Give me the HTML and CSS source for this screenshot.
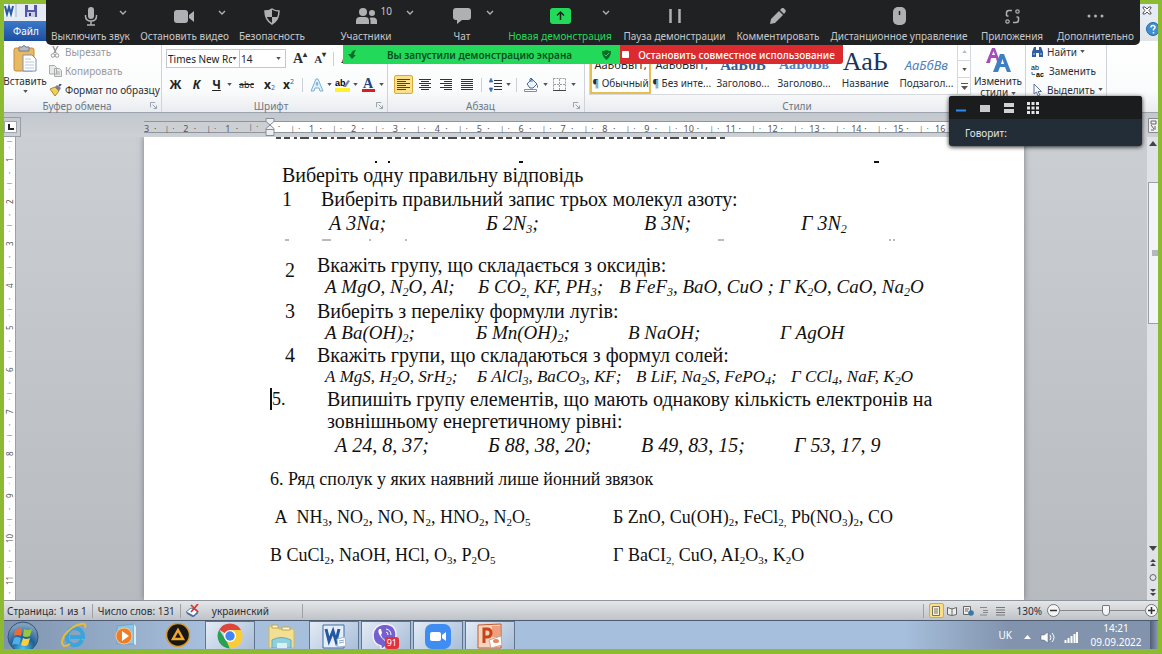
FILE: index.html
```html
<!DOCTYPE html>
<html lang="ru">
<head>
<meta charset="utf-8">
<meta name="viewport" content="width=device-width, initial-scale=1">
<title>Microsoft Word</title>
<link rel="stylesheet" href="styles.css">
</head>
<body>
<svg class="defs" aria-hidden="true">
  <symbol id="caret" viewBox="0 0 6 4"><path d="M0 0h6L3 4z" fill="currentColor"/></symbol>
  <symbol id="chev" viewBox="0 0 8 5"><path d="M1 1l3 3 3-3" fill="none" stroke="currentColor" stroke-width="1.4"/></symbol>
  <symbol id="launch" viewBox="0 0 8 8"><path d="M.5 6V.5H6M3 3l4 4M7.500 4v3.500H4" fill="none" stroke="#8b929b"/></symbol>
</svg>
<div class="screen">
  <div class="word">
    <header class="titlebar">
      <svg width="13" height="13" viewBox="0 0 13 13"><path d="M0 0h10v13H0z" fill="#eef3fa"/><path d="M1 2l2 8 2-7 2 7 2-8" fill="none" stroke="#2a5ba4" stroke-width="2"/><path d="M12 0v13" stroke="#9db4cf"/></svg>
      <svg width="12" height="12" viewBox="0 0 12 12"><path d="M0 0h12v12H0z" fill="#5557a8"/><path d="M3 0h6v5H3z" fill="#e6e9f6"/><path d="M2 7h8v5H2z" fill="#c9cde8"/><path d="M4 8h2v3H4z" fill="#3b3d80"/></svg>
      <span class="spacer"></span>
      <button class="plain" aria-label="Закрыть"><svg width="10" height="9" viewBox="0 0 10 9"><path d="M1 1h2l2 2 2-2h2v1L7 4.500l2 2.500v1H7L5 6 3 8H1V7l2-2.500L1 2z" fill="#fff" stroke="#555"/></svg></button>
    </header>
    <nav class="tabs">
      <button class="file-tab">Файл</button>
      <span class="spacer"></span>
      <button class="plain" aria-label="Справка"><svg width="12" height="14" viewBox="0 0 12 14"><circle cx="7" cy="7" r="6.500" fill="#3f8fd0" stroke="#2368a4"/><path d="M5 5.500Q5 3.500 7 3.500T9 5.500Q9 6.500 7.500 7.300V8.500M7.500 10v1.500" fill="none" stroke="#fff" stroke-width="1.500"/></svg></button>
    </nav>

    <section class="ribbon">
      <div class="group clipboard">
        <div class="tools">
          <button class="big">
            <svg width="26" height="28" viewBox="0 0 26 28"><rect x="2" y="3" width="20" height="23" rx="2" fill="#e9b862" stroke="#c48c39"/><path d="M7 2h3q2-3 4 0h3v4H7z" fill="#b9bdc4" stroke="#777b82"/><path d="M11 10h9l4 4v12H11z" fill="#fff" stroke="#7d93b5"/><path d="M13 14h6M13 17h9M13 20h9M13 23h9" stroke="#b8c7df"/></svg>
            <span>Вставить</span>
            <svg class="caret"><use href="#caret"/></svg>
          </button>
          <div class="stack">
            <button disabled><svg width="13" height="12" viewBox="0 0 13 12"><path d="M4 0l3 7M9 0L5 7" stroke="#999" stroke-width="1.500"/><circle cx="4" cy="9.500" r="1.800" fill="none" stroke="#999"/><circle cx="8" cy="9.500" r="1.800" fill="none" stroke="#999"/></svg>Вырезать</button>
            <button disabled><svg width="13" height="12" viewBox="0 0 13 12"><path d="M.5.5h5l2 2V9h-7zM5.500 3.500h5l2 2v6h-7z" fill="#e8e8e8" stroke="#aaa"/><path d="M7 7h4M7 9h4" stroke="#aaa"/></svg>Копировать</button>
            <button><svg width="13" height="12" viewBox="0 0 13 12"><path d="M1 5l5-2 4 4-4 5z" fill="#f2cf55" stroke="#ae842c"/><path d="M6 3l2-2 4 3-2 3z" fill="#777da0"/><path d="M10 2l2-2" stroke="#555" stroke-width="2"/></svg>Формат по образцу</button>
          </div>
        </div>
        <footer><span>Буфер обмена</span><svg class="launch"><use href="#launch"/></svg></footer>
      </div>

      <div class="group font">
        <div class="tools rows">
          <div class="row">
            <label class="combo name"><select aria-label="Шрифт"><option>Times New Rc</option></select><svg class="caret"><use href="#caret"/></svg></label>
            <label class="combo size"><select aria-label="Размер"><option>14</option></select><svg class="caret"><use href="#caret"/></svg></label>
            <button class="serif grow">A<sup>▴</sup></button>
            <button class="serif shrink">A<sup>▾</sup></button>
            <i class="sep"></i>
            <button class="serif">A</button>
          </div>
          <div class="row marks">
            <button><b>Ж</b></button>
            <button><b><em>К</em></b></button>
            <button class="narrow"><b><u>Ч</u></b></button><svg class="caret"><use href="#caret"/></svg>
            <button class="strike"><s>abc</s></button>
            <button class="narrow"><b>x</b><sub>2</sub></button>
            <button class="narrow"><b>x</b><sup>2</sup></button>
            <i class="sep"></i>
            <button class="narrow"><svg width="14" height="14" viewBox="0 0 14 14"><path d="M1 13L6 1h2l5 12h-3L9 10H5l-1 3zM6 7h2L7 4z" fill="#e2f0fb" stroke="#79afd9"/></svg></button><svg class="caret"><use href="#caret"/></svg>
            <button class="narrow"><svg width="15" height="15" viewBox="0 0 15 15"><path d="M0 11h15v4H0z" fill="#fff12b"/><text x="0" y="9" font-size="9" font-weight="700" font-family="Liberation Sans, sans-serif">ab</text><path d="M8 10l5-7 2 1-4 6z" fill="#7784a5"/></svg></button><svg class="caret"><use href="#caret"/></svg>
            <button class="narrow"><svg width="15" height="15" viewBox="0 0 15 15"><path d="M1 12h13v3H1z" fill="#d61f1f"/><text x="2" y="11" font-size="14" font-weight="700" fill="#24427c" font-family="Liberation Serif, serif">A</text></svg></button><svg class="caret"><use href="#caret"/></svg>
          </div>
        </div>
        <footer><span>Шрифт</span><svg class="launch"><use href="#launch"/></svg></footer>
      </div>

      <div class="group para">
        <div class="tools rows">
          <div class="row"></div>
          <div class="row marks">
            <button class="on" aria-label="По левому краю"><svg width="13" height="12" viewBox="0 0 13 12"><path d="M0 .5h13M0 2.500h9M0 4.500h13M0 6.500h9M0 8.500h13M0 10.500h9" stroke="#4a4330"/></svg></button>
            <button aria-label="По центру"><svg width="12" height="12" viewBox="0 0 12 12"><path d="M0 .5h12M2 2.500h8M0 4.500h12M2 6.500h8M0 8.500h12M2 10.500h8" stroke="#333"/></svg></button>
            <button aria-label="По правому краю"><svg width="12" height="12" viewBox="0 0 12 12"><path d="M0 .5h12M4 2.500h8M0 4.500h12M4 6.500h8M0 8.500h12M4 10.500h8" stroke="#333"/></svg></button>
            <button aria-label="По ширине"><svg width="12" height="12" viewBox="0 0 12 12"><path d="M0 .5h12M0 2.500h12M0 4.500h12M0 6.500h12M0 8.500h12M0 10.500h12" stroke="#333"/></svg></button>
            <i class="sep"></i>
            <button class="narrow" aria-label="Интервал"><svg width="13" height="14" viewBox="0 0 13 14"><path d="M5 2.500h8M5 5.500h8M5 8.500h8M5 11.500h8" stroke="#333"/><path d="M2 0l2 4H0zM2 14l2-4H0zM2 3v2M2 9v2" fill="#3b6fb6" stroke="#3b6fb6" stroke-width=".5"/></svg></button><svg class="caret"><use href="#caret"/></svg>
            <i class="sep"></i>
            <button aria-label="Заливка"><svg width="15" height="15" viewBox="0 0 15 15"><path d="M3 7l5-5 5 5-4 4H6z" fill="#eef4fb" stroke="#47679a"/><path d="M6 5V2q1-2 2 0v3" fill="none" stroke="#47679a"/><path d="M13 7q2 3 0 4z" fill="#2c76c7"/><path d="M.5 12.500h12v2H.5z" fill="#fff" stroke="#88a"/></svg></button><svg class="caret"><use href="#caret"/></svg>
            <button aria-label="Границы"><svg width="13" height="13" viewBox="0 0 13 13"><path d="M.5.5h12v12M.5.5v12M6.500 1v11M1 6.500h11" fill="none" stroke="#999" stroke-dasharray="2 1"/><path d="M0 12.500h13" stroke="#444"/></svg></button><svg class="caret"><use href="#caret"/></svg>
          </div>
        </div>
        <footer><span>Абзац</span><svg class="launch"><use href="#launch"/></svg></footer>
      </div>

      <div class="group styles">
        <div class="tools">
          <div class="gallery">
            <button class="chosen"><span class="sample">АаБбВвГг,</span><span>¶ Обычный</span></button>
            <button><span class="sample">АаБбВвГг,</span><span>¶ Без инте...</span></button>
            <button><span class="sample h1">АаБбВ</span><span>Заголово...</span></button>
            <button><span class="sample h2">АаБбВв</span><span>Заголово...</span></button>
            <button><span class="sample title">АаЬ</span><span>Название</span></button>
            <button><span class="sample sub">АаБбВв</span><span>Подзагол...</span></button>
            <div class="gallery-scroll">
              <button aria-label="Вверх" disabled><svg width="5" height="3" viewBox="0 0 6 4"><path d="M0 4h6L3 0z" fill="#bbb"/></svg></button>
              <button aria-label="Вниз"><svg class="caret"><use href="#caret"/></svg></button>
              <button aria-label="Все стили"><svg width="7" height="7" viewBox="0 0 7 7"><path d="M0 .5h7" stroke="#555"/><path d="M0 3h7L3.500 7z" fill="#555"/></svg></button>
            </div>
          </div>
          <button class="big change">
            <svg width="26" height="26" viewBox="0 0 26 26"><path d="M1 16L7 1h3l5 14h-3l-1-4H6l-1 5zM7 8h3L8.500 4z" fill="#a44fb8"/><path d="M8 25l7-18h4l7 18h-4l-2-5h-5l-2 5zM16 17h3l-1.500-5z" fill="#3f7fc4"/></svg>
            <span>Изменить<br>стили <svg class="caret"><use href="#caret"/></svg></span>
          </button>
        </div>
        <footer><span>Стили</span></footer>
      </div>

      <div class="group edit">
        <div class="tools">
          <div class="stack">
            <button><svg width="13" height="12" viewBox="0 0 13 12"><path d="M1 11V6l2-5h2v3h3V1h2l2 5v5H8V7H5v4z" fill="#2f5ea3"/><path d="M2 8h2M9 8h2" stroke="#b9d0ee"/></svg>Найти <svg class="caret"><use href="#caret"/></svg></button>
            <button><svg width="15" height="14" viewBox="0 0 15 14"><text x="0" y="6" font-size="7" font-family="Liberation Sans, sans-serif">ab</text><text x="5" y="13" font-size="7" font-family="Liberation Sans, sans-serif" font-weight="700">ac</text><path d="M1 8v2.500h3" fill="none" stroke="#3c68a8"/></svg>Заменить</button>
            <button><svg width="13" height="12" viewBox="0 0 13 12"><path d="M3 0v10l2.500-2L7 12l2-1-2-3.500h3.500z" fill="#fff" stroke="#5774a8"/></svg>Выделить <svg class="caret"><use href="#caret"/></svg></button>
          </div>
        </div>
        <footer></footer>
      </div>
    </section>

    <div class="sheet ruler-row">
      <div class="corner"><span><svg width="6" height="6" viewBox="0 0 6 6"><path d="M1 0v5h5" fill="none" stroke="#222" stroke-width="2"/></svg></span></div>
      <div class="ruler">
        <span>3</span><span>2</span><span>1</span><span class="zero"><svg width="10" height="18" viewBox="0 0 10 18"><path d="M1 .5h8v3L5 7 1 3.500zM5 7l4 3.500V17.500H1v-7zM1 11.500h8" fill="#eceef1" stroke="#888d94"/></svg></span><span>1</span><span>2</span><span>3</span><span>4</span><span>5</span><span>6</span><span>7</span><span>8</span><span>9</span><span>10</span><span>11</span><span>12</span><span>13</span><span>14</span><span>15</span><span>16</span><span class="tail"></span><span class="tail"></span>
      </div>
      <button class="plain toggle" aria-label="Линейка"><svg width="10" height="15" viewBox="0 0 10 15"><path d="M.5.5h12v14H.5z" fill="#eef0f3" stroke="#888"/><path d="M3 3h5v3H3zM7 8v4M3 12h3M3 7l3 4" fill="none" stroke="#666"/></svg></button>
    </div>

    <main class="sheet canvas">
      <div class="vruler"><span>1</span><span>2</span><span>3</span><span>4</span><span>5</span><span>6</span><span>7</span><span>8</span><span>9</span><span>10</span><span>11</span></div>
      <article class="page">
        <svg class="scrap head" height="26" viewBox="0 0 740 26"><path d="M6 1h452" stroke="#111" stroke-width="1.500" stroke-dasharray="5 3 6 4 3 3 9 4"/><path d="M105 25h2M118 25h2M249 25h4M604 25h5" stroke="#111" stroke-width="2"/></svg>
        <p class="lead">Виберіть одну правильну відповідь</p>
        <section class="q first">
          <span class="num">1</span>
          <div><p>Виберіть правильний запис трьох молекул азоту:</p>
          <p class="opts o1"><span>А 3Na;</span><span>Б 2N<sub>3</sub>;</span><span>В 3N;</span><span>Г 3N<sub>2</sub></span></p></div>
        </section>
        <svg class="scrap" height="19" viewBox="0 0 740 19"><path d="M15 5h4M52 5h9M99 5h2M135 5h2M448 5h6M619 5h2M623 5h2" stroke="#777"/></svg>
        <section class="q">
          <span class="num low">2</span>
          <div><p>Вкажіть групу, що складається з оксидів:</p>
          <p class="opts o2"><span>А MgO, N<sub>2</sub>O, Al;</span><span>Б CO<sub>2,</sub> KF, PH<sub>3</sub>;</span><span>В FeF<sub>3</sub>, BaO, CuO ;</span><span>Г K<sub>2</sub>O, CaO, Na<sub>2</sub>O</span></p></div>
        </section>
        <section class="q gap">
          <span class="num">3</span>
          <div><p>Виберіть з переліку формули лугів:</p>
          <p class="opts o3"><span>А Ba(OH)<sub>2</sub>;</span><span>Б Mn(OH)<sub>2</sub>;</span><span>В NaOH;</span><span>Г AgOH</span></p></div>
        </section>
        <section class="q">
          <span class="num">4</span>
          <div><p>Вкажіть групи, що складаються з формул солей:</p>
          <p class="opts o4"><span>А MgS, H<sub>2</sub>O, SrH<sub>2</sub>;</span><span>Б AlCl<sub>3</sub>, BaCO<sub>3</sub>, KF;</span><span>В LiF, Na<sub>2</sub>S, FePO<sub>4</sub>;</span><span>Г CCl<sub>4</sub>, NaF, К<sub>2</sub>О</span></p></div>
        </section>
        <section class="q fifth">
          <span class="num typed">5.</span>
          <div><p>Випишіть групу елементів, що мають однакову кількість електронів на<br>зовнішньому енергетичному рівні:</p>
          <p class="opts o5"><span>А 24, 8, 37;</span><span>Б 88, 38, 20;</span><span>В 49, 83, 15;</span><span>Г 53, 17, 9</span></p></div>
        </section>
        <section class="six">
          <p>6. Ряд сполук у яких наявний лише йонний звязок</p>
          <p class="pair"><span>&nbsp;А&nbsp; NH<sub>3</sub>, NO<sub>2</sub>, NO, N<sub>2</sub>, HNO<sub>2</sub>, N<sub>2</sub>O<sub>5</sub></span><span>Б ZnO, Cu(OH)<sub>2</sub>, FeCl<sub>2,</sub> Pb(NO<sub>3</sub>)<sub>2</sub>, CO</span></p>
          <p class="pair"><span>В CuCl<sub>2</sub>, NaOH, HCl, O<sub>3</sub>, P<sub>2</sub>O<sub>5</sub></span><span>Г BaCI<sub>2,</sub> CuO, AI<sub>2</sub>O<sub>3</sub>, K<sub>2</sub>O</span></p>
        </section>
      </article>
      <div class="scroll">
        <svg width="8" height="5" viewBox="0 0 8 5"><path d="M0 5h8L4 0z" fill="#444"/></svg>
        <div class="thumb"><i></i></div>
        <span class="spacer"></span>
        <svg width="8" height="5" viewBox="0 0 8 5"><path d="M0 0h8L4 5z" fill="#444"/></svg>
        <svg width="8" height="7" viewBox="0 0 8 7"><path d="M1 3h6L4 0zM1 7h6L4 4z" fill="#444"/></svg>
        <svg width="8" height="7" viewBox="0 0 8 7"><circle cx="4" cy="3.500" r="3" fill="none" stroke="#666"/></svg>
        <svg width="8" height="7" viewBox="0 0 8 7"><path d="M1 0h6L4 3zM1 4h6L4 7z" fill="#444"/></svg>
      </div>
    </main>

    <footer class="status">
      <span>Страница: 1 из 1</span><i></i>
      <span>Число слов: 131</span><i></i>
      <svg width="14" height="13" viewBox="0 0 14 13"><path d="M0 8l5-4 7 3-4 5z" fill="#fff" stroke="#5b7bb0"/><path d="M1 9l6 3.500 5-4" fill="none" stroke="#4b6ca8" stroke-width="1.500"/><path d="M5 1l7 7M12 0L5 8" stroke="#d8352c" stroke-width="1.700"/></svg>
      <span class="lang">украинский</span><i></i>
      <span class="spacer"></span><i></i>
      <div class="views">
        <button class="on" aria-label="Разметка страницы"><svg width="10" height="10" viewBox="0 0 10 10"><path d="M1.500.5h7v9h-7zM3 3h4M3 5h4M3 7h4" fill="#f7f2df" stroke="#77705a"/></svg></button>
        <button aria-label="Чтение"><svg width="10" height="10" viewBox="0 0 10 10"><path d="M.5 1.500L5 3l4.500-1.500v7L5 9.500.5 8.500zM5 3v6" fill="#eee" stroke="#666"/></svg></button>
        <button aria-label="Веб-документ"><svg width="11" height="10" viewBox="0 0 11 10"><path d="M.5.5h7v8h-7zM2 3h4M2 5h3" fill="#eee" stroke="#666"/><circle cx="8" cy="7" r="2.800" fill="#3779a4"/></svg></button>
        <button aria-label="Структура"><svg width="9" height="10" viewBox="0 0 9 10"><path d="M0 1.500h7M3 4.500h5M3 6.500h5M0 9h7" stroke="#888"/></svg></button>
        <button aria-label="Черновик"><svg width="9" height="10" viewBox="0 0 9 10"><path d="M0 1.500h9M0 4h9M0 6.500h9M0 9h9" stroke="#777"/></svg></button>
      </div>
      <span class="pct">130%</span>
      <div class="zoomer">
        <button aria-label="Уменьшить"><svg width="13" height="13" viewBox="0 0 13 13"><circle cx="6.500" cy="6.500" r="6" fill="#f4f5f6" stroke="#777"/><path d="M3 6.500h7" stroke="#333" stroke-width="1.500"/></svg></button>
        <input type="range" min="0" max="100" value="54" aria-label="Масштаб">
        <button aria-label="Увеличить"><svg width="13" height="13" viewBox="0 0 13 13"><circle cx="6.500" cy="6.500" r="6" fill="#f4f5f6" stroke="#777"/><path d="M3 6.500h7M6.500 3v7" stroke="#333" stroke-width="1.500"/></svg></button>
      </div>
    </footer>
  </div>

  <nav class="taskbar">
    <button class="start" aria-label="Пуск"><svg width="32" height="28" viewBox="0 0 32 28"><defs><radialGradient id="orb" cx=".5" cy=".9" r=".8"><stop offset="0" stop-color="#4fc3ee"/><stop offset=".5" stop-color="#1f5f96"/><stop offset="1" stop-color="#7f9fbc"/></radialGradient></defs><circle cx="16" cy="16" r="15" fill="url(#orb)" stroke="#31567a"/><path d="M8 9q4-3 7-1l-1 7q-4-2-7 0z" fill="#ee6a35"/><path d="M17 8q4 2 8 0l-2 7q-4 2-7 0z" fill="#93c842"/><path d="M7 17q3-2 7 0l-2 7q-3-2-7 0z" fill="#4db0e9"/><path d="M16 17q3 2 7 0l-2 7q-4 2-7 0z" fill="#fbcf3c"/></svg></button>
    <button aria-label="Internet Explorer"><svg width="28" height="26" viewBox="0 0 28 26"><path d="M22 18q-3 6-9 5-7-2-6-10 2-7 8-7 8 1 8 9H10" fill="none" stroke="#39a5dd" stroke-width="4"/><path d="M25 6q2-5-4-4Q11 4 4 14q-4 8 0 10 3 0 6-2" fill="none" stroke="#e9bd35" stroke-width="2"/></svg></button>
    <button aria-label="Проигрыватель"><svg width="24" height="24" viewBox="0 0 24 24"><path d="M3 3l17-2v20H3z" fill="#8fc5e5" stroke="#6ea5c8"/><path d="M20 1l2 3v18l-2-1z" fill="#d5ebf8"/><circle cx="10" cy="13" r="8" fill="#f07d26" stroke="#f8c693"/><path d="M8 8l7 5-7 5z" fill="#fff"/></svg></button>
    <button aria-label="AIMP"><svg width="26" height="26" viewBox="0 0 26 26"><circle cx="13" cy="13" r="11.500" fill="#171717" stroke="#d79a2b" stroke-width="1.500"/><path d="M13 8l5 9H8z" fill="none" stroke="#f3a72a" stroke-width="2.500"/></svg></button>
    <button class="open" aria-label="Chrome"><svg width="26" height="26" viewBox="0 0 26 26"><path d="M13 13L2.200 6.800A12.500 12.500 0 0 1 24 7H13z" fill="#df4538"/><path d="M13 13V7h11A12.500 12.500 0 0 1 13 25.500z" fill="#fbcd35"/><path d="M2.200 6.800L10 19l3 6.500A12.500 12.500 0 0 1 2.200 6.800z" fill="#2aa052"/><path d="M18 16l-5 9.500L10 18z" fill="#fbcd35"/><circle cx="13" cy="13" r="6" fill="#fff"/><circle cx="13" cy="13" r="4.700" fill="#4285f4"/></svg></button>
    <button aria-label="Проводник"><svg width="28" height="26" viewBox="0 0 28 26"><path d="M1 4h8l2 3h15v19H1z" fill="#f1df93" stroke="#d2b95a"/><path d="M4 3h6v3H4zM14 5h8v3h-8z" fill="#fff5c9" stroke="#bfa550"/><path d="M4 18q9-5 19 0v8H4z" fill="#8fd0df" stroke="#64a9be"/><path d="M9 21h10v5H9z" fill="#d8f1f2"/></svg></button>
    <button class="open" aria-label="Word"><svg width="25" height="26" viewBox="0 0 25 26"><path d="M1 2h21v23H1z" fill="#e5eef9" stroke="#3d6ba9"/><path d="M4 6l3 12 4-10 3 10 3-12" fill="none" stroke="#2458a3" stroke-width="3"/><path d="M15 16l8-2 1 9-8 1z" fill="#fff" stroke="#9bb3d2"/><path d="M17 18l5-1M17 20l5-1" stroke="#8aa6ce"/></svg></button>
    <button class="open" aria-label="Viber"><svg width="28" height="26" viewBox="0 0 28 26"><path d="M12 1q12 0 12 11t-11 12l-4 3v-4Q1 21 1 12T12 1z" fill="#7460cf" stroke="#f3f0fc" stroke-width="1.500"/><path d="M7 6q-2 3 2 8t8 6q2-1 1-3l-3-1-2 1q-3-2-4-5l1-2-1-4z" fill="#fff"/><path d="M14 6q5 1 5 6M14 9q2 0 2 3" fill="none" stroke="#fff"/></svg><span class="badge">91</span></button>
    <button class="open" aria-label="Zoom"><svg width="26" height="26" viewBox="0 0 26 26"><rect y="1" width="26" height="25" rx="7" fill="#3f8cf3"/><rect x="5" y="9" width="11" height="9" rx="2" fill="#fff"/><path d="M17 12l4-3v9l-4-3z" fill="#fff"/></svg></button>
    <button class="open" aria-label="PowerPoint"><svg width="26" height="26" viewBox="0 0 26 26"><path d="M1 2l23-1v24H1z" fill="#f5d4bd" stroke="#c75a2a"/><path d="M15 3h8v11h-8z" fill="#ef9f7e"/><path d="M7 20V6h3q4 0 4 4t-4 4H7" fill="none" stroke="#c8441b" stroke-width="3"/><path d="M12 17l12-4 1 9-11 3z" fill="#fff" stroke="#d8a38b"/><ellipse cx="19" cy="18" rx="3" ry="2" fill="#e58860"/></svg></button>
    <span class="spacer"></span>
    <span class="kb">UK</span>
    <div class="tray">
      <svg width="7" height="4" viewBox="0 0 7 4"><path d="M0 4h7L3.500 0z" fill="#fff"/></svg>
      <svg width="15" height="13" viewBox="0 0 15 13"><path d="M1 4h3l4-3v11L4 9H1z" fill="#fff" stroke="#506078" stroke-width=".5"/><path d="M10 4q2 2.500 0 5M12 2q4 4.500 0 9" fill="none" stroke="#fff"/></svg>
      <svg width="14" height="12" viewBox="0 0 14 12"><path d="M1.500 12V9M4.500 12V7M7.500 12V5M10.500 12V3M13 12V1" stroke="#fff" stroke-width="2"/></svg>
    </div>
    <time class="clock"><span>14:21</span><span>09.09.2022</span></time>
    <button class="peek" aria-label="Свернуть все окна"></button>
  </nav>

  <div class="meeting">
    <div class="controls">
      <button><span class="ic"><svg width="14" height="19" viewBox="0 0 14 19"><rect x="4" y="0" width="6" height="12" rx="3" fill="#aeb0b3"/><path d="M1.500 8v1q0 5 5.500 5t5.500-5V8M7 14v4M3 18h8" fill="none" stroke="#aeb0b3" stroke-width="1.500"/></svg></span><span class="side"><svg class="chev"><use href="#chev"/></svg></span><span class="cap">Выключить звук</span></button>
      <button><span class="ic"><svg width="21" height="13" viewBox="0 0 21 13"><rect width="14" height="13" rx="3" fill="#aeb0b3"/><path d="M15 5l5-4v11l-5-4z" fill="#aeb0b3"/></svg></span><span class="side"><svg class="chev"><use href="#chev"/></svg></span><span class="cap">Остановить видео</span></button>
      <button><span class="ic"><svg width="16" height="17" viewBox="0 0 16 17"><path d="M8 1q3 2 7 2 0 9-7 13Q1 12 1 3q4 0 7-2z" fill="none" stroke="#aeb0b3" stroke-width="1.500"/><path d="M8 1v8H1.500Q1 6 1 3q4 0 7-2zM8 9h6.500Q13 13 8 16z" fill="#aeb0b3"/></svg></span><span class="cap">Безопасность</span></button>
      <button><span class="ic"><svg width="21" height="16" viewBox="0 0 21 16"><circle cx="7" cy="4" r="4" fill="#aeb0b3"/><path d="M0 16v-3q0-4 4-4h5q4 0 4 4v3z" fill="#aeb0b3"/><circle cx="16" cy="5" r="3" fill="#aeb0b3"/><path d="M15 9.500h2q4 0 4 3.500v3h-6.500v-3q0-2-1-3z" fill="#aeb0b3"/></svg></span><span class="side"><span>10</span><svg class="chev"><use href="#chev"/></svg></span><span class="cap">Участники</span></button>
      <button><span class="ic"><svg width="18" height="16" viewBox="0 0 18 16"><path d="M3 0h12q3 0 3 3v6q0 3-3 3H9l-5 4v-4H3q-3 0-3-3V3q0-3 3-3z" fill="#aeb0b3"/></svg></span><span class="side"><svg class="chev"><use href="#chev"/></svg></span><span class="cap">Чат</span></button>
      <button class="go"><span class="ic"><svg width="21" height="16" viewBox="0 0 21 16"><rect width="21" height="16" rx="3" fill="#23d959"/><path d="M10.500 12V5M7 7.500L10.500 4 14 7.500" fill="none" stroke="#12241a" stroke-width="1.500"/></svg></span><span class="side"><svg class="chev"><use href="#chev"/></svg></span><span class="cap">Новая демонстрация</span></button>
      <button><span class="ic"><svg width="12" height="14" viewBox="0 0 12 14"><path d="M1.500 0v14M10.500 0v14" stroke="#aeb0b3" stroke-width="2.500"/></svg></span><span class="cap">Пауза демонстрации</span></button>
      <button><span class="ic"><svg width="16" height="16" viewBox="0 0 16 16"><path d="M0 16l1-5 8-8 4 4-8 8zM10 2l2-2q1-.5 2 .5l1.500 1.500q.5 1 0 2L14 6z" fill="#aeb0b3"/></svg></span><span class="cap">Комментировать</span></button>
      <button><span class="ic"><svg width="13" height="18" viewBox="0 0 13 18"><rect width="13" height="18" rx="5" fill="#aeb0b3"/><path d="M6.500 4v4" stroke="#222" stroke-width="1.500"/></svg></span><span class="cap">Дистанционное управление</span></button>
      <button><span class="ic"><svg width="15" height="15" viewBox="0 0 15 15"><path d="M1.500 7V4q0-2.500 2.500-2.500h3M13.500 8v3q0 2.500-2.500 2.500H8M1.500 7h2M13.500 8h-2" fill="none" stroke="#aeb0b3" stroke-width="1.500"/><circle cx="12.500" cy="2.500" r="1.700" fill="none" stroke="#aeb0b3" stroke-width="1.200"/><circle cx="2.500" cy="12.500" r="1.700" fill="none" stroke="#aeb0b3" stroke-width="1.200"/></svg></span><span class="cap">Приложения</span></button>
      <button><span class="ic"><svg width="17" height="4" viewBox="0 0 17 4"><circle cx="2" cy="2" r="1.500" fill="#aeb0b3"/><circle cx="8.500" cy="2" r="1.500" fill="#aeb0b3"/><circle cx="15" cy="2" r="1.500" fill="#aeb0b3"/></svg></span><span class="cap">Дополнительно</span></button>
    </div>
    <div class="share">
      <div class="live"><svg width="9" height="9" viewBox="0 0 9 9"><path d="M8 0Q4 0 3 4H0l4 5 4-4H6q0-3 2-5z" fill="#0b6b2b"/></svg><span>Вы запустили демонстрацию экрана</span><svg width="9" height="10" viewBox="0 0 9 10"><path d="M4.500 0Q6 1 9 1q0 6-4.500 9Q0 7 0 1q3 0 4.500-1z" fill="#0b6b2b"/><path d="M2.500 4.500L4 6l3-3" fill="none" stroke="#23d959"/></svg></div>
      <button class="stop"><svg width="7" height="7"><rect width="7" height="7" rx="1" fill="#fff"/></svg>Остановить совместное использование</button>
    </div>
  </div>

  <aside class="speaker">
    <div class="modes">
      <button aria-label="Свернуть"><svg width="12" height="12" viewBox="0 0 12 12"><path d="M1 8.500h10" stroke="#2f8bef" stroke-width="2"/></svg></button>
      <button aria-label="Докладчик"><svg width="12" height="12" viewBox="0 0 12 12"><rect x="1" y="3" width="10" height="7" fill="#c9cacc"/></svg></button>
      <button aria-label="Список"><svg width="12" height="12" viewBox="0 0 12 12"><path d="M1 1h10v4H1zM1 7h10v4H1z" fill="#d0d1d3"/></svg></button>
      <button aria-label="Сетка"><svg width="12" height="12" viewBox="0 0 12 12"><path d="M0 0h3v3H0zM4.500 0h3v3h-3zM9 0h3v3H9zM0 4.500h3v3H0zM4.500 4.500h3v3h-3zM9 4.500h3v3H9zM0 9h3v3H0zM4.500 9h3v3h-3zM9 9h3v3H9z" fill="#e4e5e6"/></svg></button>
    </div>
    <p>Говорит:</p>
  </aside>
</div>
</body>
</html>
```
FILE: styles.css
```css
* { box-sizing: border-box; }
body { margin: 0; font: 10px/12px "Noto Sans", "Open Sans", sans-serif; color: #2b2f36; }
p { margin: 0; }
button { font: inherit; color: inherit; background: none; border: 0; padding: 0; margin: 0; display: flex; align-items: center; justify-content: center; }
svg { display: block; flex: none; }
.defs { position: absolute; width: 0; height: 0; }
.spacer { flex: 1; }
.caret { width: 5px; height: 3px; color: #555; }
.launch { width: 7px; height: 7px; }
.chev { width: 8px; height: 5px; color: #aeb0b3; }

.screen { position: relative; min-height: 100vh; padding: 4px 4px 5px; background: #8cbb32; display: flex; flex-direction: column; }
.word { flex: 1; display: flex; flex-direction: column; background: #eef1f5; }

.titlebar { display: flex; align-items: center; gap: 8px; height: 13px; padding-right: 6px; background: #e4ebf4; }
.tabs { display: flex; height: 24px; background: linear-gradient(#e8edf4, #dfe4eb); }
.file-tab { width: 44px; margin-top: 4px; color: #fff; background: linear-gradient(#3c79c9, #1c4f9f); }

.ribbon { display: flex; height: 72px; background: linear-gradient(#fff, #fafbfc 70%, #e9ecf0); border-bottom: 1px solid #9ca3ac; }
.group { display: flex; flex-direction: column; border-right: 1px solid #cfd3d8; }
.group > footer { display: flex; align-items: center; height: 13px; padding-right: 4px; color: #6c7683; }
.group > footer span { flex: 1; text-align: center; }
.tools { display: flex; flex: 1; padding-top: 1px; }
.clipboard { width: 158px; }
.clipboard .stack { padding-left: 3px; }
.font { width: 226px; padding-left: 4px; }
.para { width: 197px; }
.styles { flex: 1; max-width: 441px; padding-left: 4px; }
.group.styles > footer { padding-right: 20px; }
.edit { width: 81px; }
.big { flex-direction: column; justify-content: flex-start; width: 42px; padding-top: 3px; gap: 3px; line-height: 11px; }
.stack { display: flex; flex-direction: column; padding-left: 5px; }
.stack button { height: 19px; gap: 3px; justify-content: flex-start; white-space: nowrap; }
.stack button:disabled { color: #9a9a9a; }
.rows { flex-direction: column; padding-top: 8px; gap: 7px; }
.row { display: flex; align-items: center; height: 19px; gap: 7px; }
.combo { display: flex; align-items: center; height: 19px; border: 1px solid #c3c8ce; background: #fff; padding-right: 4px; }
.combo select { appearance: none; flex: 1; min-width: 0; border: 0; padding: 0 0 0 1px; background: none; font: inherit; color: #222; }
.combo.name { width: 74px; padding-right: 2px; }
.combo.size { width: 47px; margin-left: -8px; }
.serif { font: bold 14px/16px "Liberation Serif", serif; }
.serif sup { font-size: 8px; line-height: 8px; align-self: flex-start; }
.shrink { font-size: 11px; }
.sep { width: 1px; height: 14px; background: #ccd0d5; }
.marks { gap: 2px; }
.marks button { width: 19px; height: 19px; font-size: 12px; color: #222; }
.marks .narrow { width: 17px; }
.marks .strike { width: 25px; }
.marks sub, .marks sup { font-size: 7px; line-height: 7px; color: #2d62a8; padding: 3px 0; }
.marks sub { align-self: flex-end; }
.marks sup { align-self: flex-start; }
.marks s { font-size: 9px; }
.marks .sep { margin: 0 3px; }
.para .marks { padding-left: 6px; }
.on { background: #fbe08a; border: 1px solid #d9a93c; border-radius: 2px; }

.gallery { flex: 1; display: grid; grid-template-columns: repeat(6, 1fr) 13px; height: 53px; background: #fff; border: 1px solid #d5d8dc; }
.gallery > button { flex-direction: column; justify-content: flex-end; gap: 5px; padding-bottom: 5px; overflow: hidden; white-space: nowrap; }
.gallery .chosen { border: 2px solid #e5bf50; padding-bottom: 3px; }
.sample { font-size: 11px; line-height: 14px; color: #222; }
.h1, .h2, .title { font-family: "Liberation Serif", serif; font-weight: bold; color: #365f91; font-size: 15px; }
.h2 { font-size: 14px; color: #4f81bd; }
.title { font-size: 26px; line-height: 20px; font-weight: normal; color: #17365d; }
.sub { font-size: 13px; font-style: italic; color: #4f81bd; }
.gallery-scroll { display: grid; grid-template-rows: repeat(3, 1fr); border-left: 1px solid #d5d8dc; }
.gallery-scroll button + button { border-top: 1px solid #d5d8dc; }
.change { width: 54px; padding-top: 5px; }
.change .caret { display: inline-block; vertical-align: middle; }

.sheet { display: grid; grid-template-columns: 17px minmax(0, 1fr) minmax(0, 880px) minmax(0, 1fr) 11px; }
.ruler-row { height: 24px; background: linear-gradient(#c3c8ce, #cdd1d6); align-items: start; }
.corner { margin-top: 4px; height: 20px; border: 1px solid #989ea6; border-left: 0; padding: 3px 3px 3px 0; }
.corner span { display: flex; align-items: center; justify-content: center; height: 12px; background: #fff; border: 1px solid #9fa5ad; }
.ruler { grid-column: 3; display: grid; grid-template-columns: 1fr repeat(20, 2fr) 1fr; margin-top: 8px; height: 12px; border: solid #8f959d; border-width: 1px 0; background: linear-gradient(90deg, #ccd0d5 126px, #fff 126px); font-size: 9px; line-height: 10px; color: #555; }
.ruler span { display: flex; justify-content: space-between; align-items: center; }
.ruler span + span::before { content: "|  ·"; white-space: pre; font-size: 7px; width: 13px; }
.ruler span::after { content: "·"; width: 13px; }
.ruler span:first-child::after { width: 11px; }
.ruler .tail::after, .ruler .tail::before { display: none; }
.ruler .zero { align-items: flex-start; }
.ruler .zero svg { margin-top: -4px; }
.toggle { grid-column: 5; margin-top: 5px; }

.canvas { flex: 1; background: linear-gradient(#cbcfd4, #b7babf); }
.vruler { width: 12px; height: 0; min-height: 100%; padding-top: 3px; background: #fff; border-right: 1px solid #9aa1aa; writing-mode: vertical-rl; font-size: 8px; line-height: 11px; color: #555; overflow: hidden; display: flex; }
.vruler span { height: 42px; flex: none; display: flex; align-items: center; justify-content: space-between; transform: rotate(180deg); }
.vruler span::before { content: "·"; padding-top: 8px; }
.vruler span::after { content: "·  |"; white-space: pre; font-size: 6px; }
.page { grid-column: 3; background: #fff; box-shadow: 0 0 6px #777b82; clip-path: inset(0 -8px); padding-left: 126px; font: 20px/22px "Liberation Serif", serif; color: #111; }
.scroll { grid-column: 5; display: flex; flex-direction: column; align-items: center; gap: 8px; padding: 4px 0; background: #dfe3e8; }
.thumb { display: flex; flex-direction: column; justify-content: center; width: 10px; height: 142px; margin-top: 28px; border: 1px solid #9aa0a8; border-right: 0; background: #f2f4f7; }
.thumb i { height: 6px; margin-left: 3px; background: #b3b8be; }
.page sub { font-size: 12px; line-height: 0; vertical-align: -3px; }
.scrap { width: 740px; max-width: 100%; }
.lead { padding-left: 12px; line-height: 24px; }
.q { display: grid; grid-template-columns: 47px 1fr; }
.q .num { padding-left: 15px; }
.num.low { padding-top: 5px; }
.first { grid-template-columns: 51px 1fr; line-height: 24px; }
.first .num { padding-left: 12px; }
.gap { margin-top: 2px; }
.fifth { grid-template-columns: 57px 1fr; }
.q .typed { padding: 0; font-size: 18px; justify-self: start; height: 22px; border-left: 2px solid #111; }
.opts { display: grid; font-style: italic; white-space: nowrap; }
.o1 { grid-template-columns: 157px 158px 157px 1fr; padding-left: 8px; }
.o2 { grid-template-columns: 153px 141px 160px 1fr; padding-left: 8px; font-size: 19px; }
.o3 { grid-template-columns: 151px 152px 152px 1fr; padding-left: 8px; font-size: 19px; }
.o4 { grid-template-columns: 152px 159px 155px 1fr; padding-left: 8px; font-size: 17px; }
.o5 { grid-template-columns: 153px 153px 153px 1fr; padding: 2px 0 0 8px; }
.six { display: grid; gap: 16px; padding: 12px 0 20px; font-size: 18px; }
.pair { display: grid; grid-template-columns: 343px 1fr; }
.page .pair sub { font-size: 11px; }

.status { display: flex; align-items: center; height: 20px; gap: 5px; padding-left: 3px; border-top: 1px solid #8f959d; background: linear-gradient(#e4e6e9, #bfc3c8); white-space: nowrap; overflow: hidden; }
.status > i { width: 1px; height: 14px; background: #9da2a9; }
.lang { padding: 0 28px 0 7px; }
.views { display: flex; gap: 1px; margin-right: 4px; }
.views button { width: 15px; height: 15px; }
.zoomer { display: flex; align-items: center; width: 111px; }
.zoomer input { flex: 1; min-width: 0; height: 14px; margin: 0; appearance: none; background: linear-gradient(#888, #888) center / 100% 1px no-repeat; }
.zoomer input::-webkit-slider-thumb { appearance: none; width: 8px; height: 11px; background: #f4f5f6; border: 1px solid #777; border-radius: 1px 1px 4px 4px; }

.taskbar { display: flex; height: 29px; gap: 2px; border-top: 1px solid #4d5b70; background: linear-gradient(90deg, #7f93ae, #a6bfdc 200px, #a6bfdc 78%, #8293ad 87%); color: #fff; overflow: hidden; }
.taskbar > button { position: relative; width: 50px; }
.taskbar > .start { width: 43px; padding-right: 5px; }
.open { background: linear-gradient(135deg, #e3ebf4, #a9bed8); border: 1px solid #61748f; border-bottom: 0; }
.badge { position: absolute; right: 11px; bottom: 0; padding: 0 2px; font-size: 9px; line-height: 12px; background: #e0323e; border-radius: 3px; }
.kb { align-self: center; padding-right: 10px; }
.tray { display: flex; align-items: center; gap: 9px; padding-top: 4px; }
.clock { display: flex; flex-direction: column; align-items: center; justify-content: center; width: 64px; line-height: 14px; margin-left: 4px; }
.taskbar > .peek { width: 8px; background: linear-gradient(90deg, #4f5e75, #8a9ab2); }

.meeting { position: absolute; top: 0; left: 46px; right: 22px; }
.controls { display: grid; grid-template-columns: 89fr 99fr 76fr 112fr 80fr 116fr 113fr 94fr 148fr 78fr 89fr; height: 45px; background: #202123; color: #c6c7c9; border-radius: 0 0 5px 5px; }
.controls button { display: grid; grid-template: 26px 13px / 1fr auto 1fr; align-content: start; padding-top: 3px; white-space: nowrap; }
.ic { grid-column: 2; }
.side { grid-column: 3; align-self: start; display: flex; width: 100%; align-items: flex-start; justify-content: flex-end; padding: 2px 8px 0 0; gap: 14px; }
.side .chev { margin-top: 5px; }
.cap { grid-area: 2 / 1 / 3 / 4; justify-self: center; }
.go .cap { color: #23d959; }
.share { display: flex; justify-content: center; height: 19px; }
.live, .stop { display: flex; align-items: center; height: 19px; }
.live { width: 277px; justify-content: space-between; padding: 0 9px 0 5px; background: #23d959; color: #084f1f; font-weight: 600; }
.stop { width: 223px; gap: 9px; padding-right: 6px; background: #dc2b2f; color: #fff; font-weight: 500; border-radius: 0 0 3px 0; }

.speaker { position: absolute; top: 96px; right: 20px; width: 193px; border-radius: 3px; overflow: hidden; background: #222d38; color: #e4e6e8; box-shadow: 0 1px 4px #222; }
.modes { display: flex; gap: 12px; height: 23px; padding-left: 6px; background: #1b1c1e; }
.speaker p { padding: 8px 16px 7px; }
```
